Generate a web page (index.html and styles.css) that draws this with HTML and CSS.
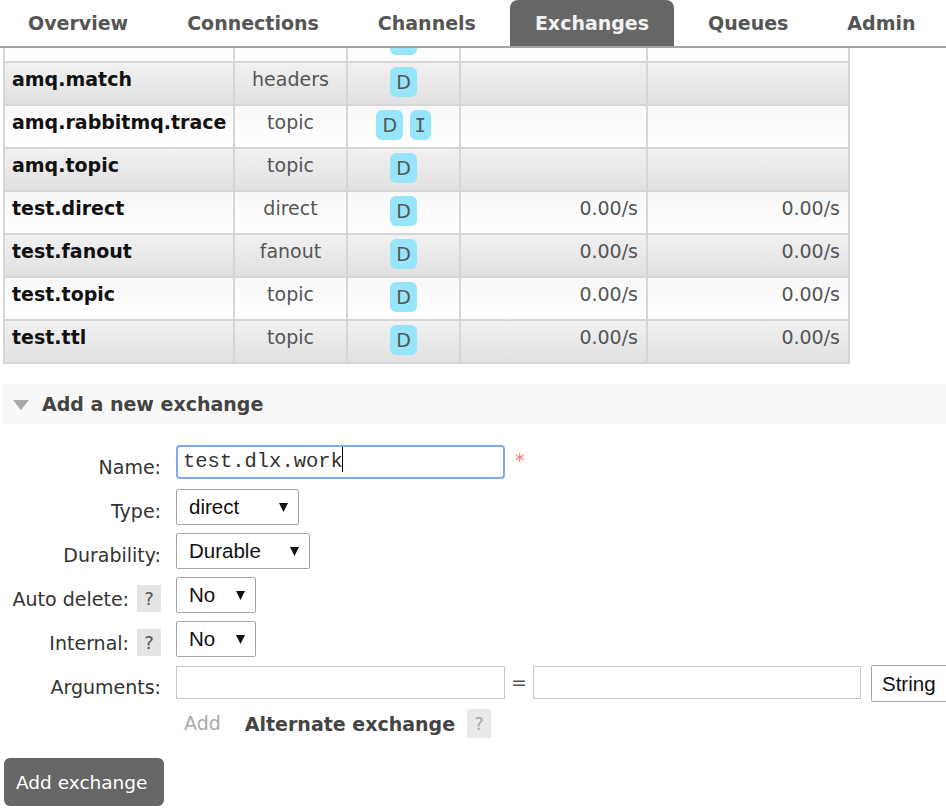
FILE: index.html
```html
<!DOCTYPE html>
<html lang="en">
<head>
<meta charset="utf-8">
<title>Exchanges</title>
<link rel="stylesheet" href="styles.css">
</head>
<body>
<header class="nav">
  <ul class="tabs">
    <li class="tab">Overview</li>
    <li class="tab">Connections</li>
    <li class="tab">Channels</li>
    <li class="tab active">Exchanges</li>
    <li class="tab">Queues</li>
    <li class="tab">Admin</li>
  </ul>
</header>
<main class="main">
  <div class="list">
    <div class="row alt2 row-cut"><div class="c name"></div><div class="c type"></div><div class="c feat"><span class="badge badge-cut"></span></div><div class="c rate"></div><div class="c rate"></div></div>
    <div class="row alt1"><div class="c name">amq.match</div><div class="c type">headers</div><div class="c feat"><span class="badge">D</span></div><div class="c rate"></div><div class="c rate"></div></div>
    <div class="row alt2"><div class="c name">amq.rabbitmq.trace</div><div class="c type">topic</div><div class="c feat"><span class="badge">D</span><span class="badge badge-i">I</span></div><div class="c rate"></div><div class="c rate"></div></div>
    <div class="row alt1"><div class="c name">amq.topic</div><div class="c type">topic</div><div class="c feat"><span class="badge">D</span></div><div class="c rate"></div><div class="c rate"></div></div>
    <div class="row alt2"><div class="c name">test.direct</div><div class="c type">direct</div><div class="c feat"><span class="badge">D</span></div><div class="c rate">0.00/s</div><div class="c rate">0.00/s</div></div>
    <div class="row alt1"><div class="c name">test.fanout</div><div class="c type">fanout</div><div class="c feat"><span class="badge">D</span></div><div class="c rate">0.00/s</div><div class="c rate">0.00/s</div></div>
    <div class="row alt2"><div class="c name">test.topic</div><div class="c type">topic</div><div class="c feat"><span class="badge">D</span></div><div class="c rate">0.00/s</div><div class="c rate">0.00/s</div></div>
    <div class="row alt1"><div class="c name">test.ttl</div><div class="c type">topic</div><div class="c feat"><span class="badge">D</span></div><div class="c rate">0.00/s</div><div class="c rate">0.00/s</div></div>
  </div>

  <section class="section">
    <h2 class="section-head"><span class="tri"></span>Add a new exchange</h2>
    <div class="form">
      <div class="lbl"><span class="lbl-text">Name:</span></div>
      <div class="ctl">
        <div class="field focus">test.dlx.work<span class="caret"></span></div>
        <span class="req">*</span>
      </div>

      <div class="lbl"><span class="lbl-text">Type:</span></div>
      <div class="ctl"><div class="select w-type"><span>direct</span><svg class="arrow" width="9" height="10" viewBox="0 0 9 10"><polygon points="0,1 9,1 4.5,10" fill="#111"/></svg></div></div>

      <div class="lbl"><span class="lbl-text">Durability:</span></div>
      <div class="ctl"><div class="select w-dur"><span>Durable</span><svg class="arrow" width="9" height="10" viewBox="0 0 9 10"><polygon points="0,1 9,1 4.5,10" fill="#111"/></svg></div></div>

      <div class="lbl"><span class="lbl-text">Auto delete:</span><span class="help">?</span></div>
      <div class="ctl"><div class="select w-no"><span>No</span><svg class="arrow" width="9" height="10" viewBox="0 0 9 10"><polygon points="0,1 9,1 4.5,10" fill="#111"/></svg></div></div>

      <div class="lbl"><span class="lbl-text">Internal:</span><span class="help">?</span></div>
      <div class="ctl"><div class="select w-no"><span>No</span><svg class="arrow" width="9" height="10" viewBox="0 0 9 10"><polygon points="0,1 9,1 4.5,10" fill="#111"/></svg></div></div>

      <div class="lbl"><span class="lbl-text">Arguments:</span></div>
      <div class="ctl">
        <div class="field plain w-arg"></div>
        <span class="eq">=</span>
        <div class="field plain w-val"></div>
        <div class="select w-str"><span>String</span></div>
      </div>

      <div class="lbl"></div>
      <div class="ctl add-row">
        <span class="add">Add</span>
        <span class="alt">Alternate exchange</span>
        <span class="help help-light">?</span>
      </div>
    </div>
    <button class="btn" type="button">Add exchange</button>
  </section>
</main>
</body>
</html>
```

FILE: styles.css
```css
html, body {
  margin: 0;
  padding: 0;
  overflow: hidden;
  background: #fff;
}

body {
  font-family: "DejaVu Sans", Verdana, sans-serif;
  font-size: 19px;
  color: #333;
}

/* ---------- navigation ---------- */
.tabs {
  display: flex;
  gap: 9px;
  list-style: none;
  margin: 0;
  padding: 0 0 0 3px;
  height: 46px;
  border-bottom: 2px solid #a3a3a3;
}

.tab {
  padding: 0 25px;
  line-height: 47px;
  font-weight: bold;
  font-size: 19px;
  color: #555;
  white-space: nowrap;
}

.tab.active {
  background: #666;
  color: #f2f2f2;
  border-radius: 8px 8px 0 0;
}

/* ---------- exchanges list ---------- */
.main {
  padding-left: 3px;
}

.list {
  width: 847px;
  box-sizing: border-box;
  border-left: 2px solid #d6d6d6;
}

.row {
  display: grid;
  grid-template-columns: 230px 113px 113px 187px 202px;
  height: 43px;
  box-sizing: border-box;
  border-bottom: 2px solid #d6d6d6;
}

.row.alt1 {
  background: linear-gradient(#f1f1f1, #e1e1e1);
}

.row.alt2 {
  background: linear-gradient(#f8f8f8, #ffffff);
}

.row.row-cut {
  height: 15px;
  background: linear-gradient(#fdfdfd, #ffffff);
}

.c {
  box-sizing: border-box;
  border-right: 2px solid #d6d6d6;
  padding: 6px 8px 0 7px;
  line-height: 21px;
  white-space: nowrap;
  overflow: hidden;
}

.name {
  font-weight: bold;
  color: #111;
}

.type {
  text-align: center;
  color: #555;
  padding-left: 0;
  padding-right: 0;
}

.rate {
  text-align: right;
  color: #555;
}

.feat {
  display: flex;
  justify-content: center;
  gap: 7px;
  padding: 4px 0 0;
}

.row-cut .feat {
  padding-top: 0;
}

.badge {
  display: inline-block;
  height: 30px;
  line-height: 31px;
  padding: 0 6px;
  border-radius: 6px;
  background: #97e5fb;
  color: #555;
  font-size: 19px;
}

.badge-cut {
  width: 27px;
  padding: 0;
  margin-top: -23px;
  flex: none;
}

.badge-i {
  font-family: "DejaVu Sans Mono", monospace;
  padding: 0 4.5px;
}

/* ---------- add exchange section ---------- */
.section {
  margin-top: 20px;
}

.section-head {
  display: flex;
  align-items: center;
  height: 40px;
  margin: 0;
  background: #f8f8f8;
  font-size: 19px;
  font-weight: bold;
  color: #444;
}

.tri {
  width: 0;
  height: 0;
  margin: 1px 13px 0 10px;
  border-left: 8.5px solid transparent;
  border-right: 8.5px solid transparent;
  border-top: 10px solid #a8a8a8;
}

.form {
  display: grid;
  grid-template-columns: 158px auto;
  column-gap: 15px;
  grid-auto-rows: 44px;
  margin-top: 21px;
}

.lbl {
  display: flex;
  justify-content: flex-end;
  align-items: flex-start;
  gap: 8px;
}

.lbl-text {
  padding-top: 11px;
  line-height: 22px;
  color: #333;
  white-space: nowrap;
}

.help {
  display: inline-block;
  width: 24px;
  height: 27px;
  margin-top: 8px;
  line-height: 28px;
  text-align: center;
  background: #e4e4e4;
  color: #555;
  font-size: 18px;
}

.help-light {
  margin-top: 0;
  height: 29px;
  line-height: 30px;
  color: #aaa;
  background: #e9e9e9;
}

.ctl {
  display: flex;
  align-items: flex-start;
}

.field {
  box-sizing: border-box;
  background: #fff;
}

.field.focus {
  width: 329px;
  height: 34px;
  border: 2px solid #80a9f2;
  border-radius: 4px;
  padding-left: 5px;
  font-family: "Liberation Mono", "Courier New", monospace;
  font-size: 20.5px;
  line-height: 30px;
  color: #333;
  white-space: nowrap;
}

.caret {
  display: inline-block;
  width: 1px;
  height: 25px;
  margin-left: -1px;
  background: #000;
  vertical-align: -5px;
}

.req {
  margin: 4px 0 0 10px;
  line-height: 22px;
  color: #f77;
  font-size: 19px;
}

.field.plain {
  height: 33px;
  margin-top: 1px;
  border: 1px solid #c6c6c6;
}

.w-arg { width: 329px; }
.w-val { width: 328px; }

.eq {
  width: 28px;
  text-align: center;
  line-height: 35px;
  color: #555;
}

.select {
  display: flex;
  align-items: center;
  justify-content: space-between;
  box-sizing: border-box;
  height: 36px;
  padding: 0 10px 0 12px;
  border: 1px solid #a6a6a6;
  border-radius: 2px;
  background: #fff;
  font-family: "Liberation Sans", Arial, sans-serif;
  font-size: 20.5px;
  color: #111;
}

.arrow {
  display: block;
  flex: none;
}

.w-type { width: 123px; }
.w-dur { width: 134px; }
.w-no { width: 80px; }
.w-str {
  width: 110px;
  height: 37px;
  margin-left: 10px;
  padding-left: 10px;
  flex: none;
}

.add {
  margin-left: 8px;
  padding-top: 3px;
  line-height: 22px;
  color: #aaa;
}

.alt {
  margin-left: 24px;
  margin-right: 12px;
  padding-top: 4px;
  line-height: 22px;
  font-weight: bold;
  color: #444;
}

.btn {
  display: block;
  margin: 5px 0 0 1px;
  height: 48px;
  padding: 0 17px 0 12px;
  border: none;
  border-radius: 6px;
  background: #666;
  color: #fff;
  font-family: "DejaVu Sans", Verdana, sans-serif;
  font-size: 18.5px;
}
```
